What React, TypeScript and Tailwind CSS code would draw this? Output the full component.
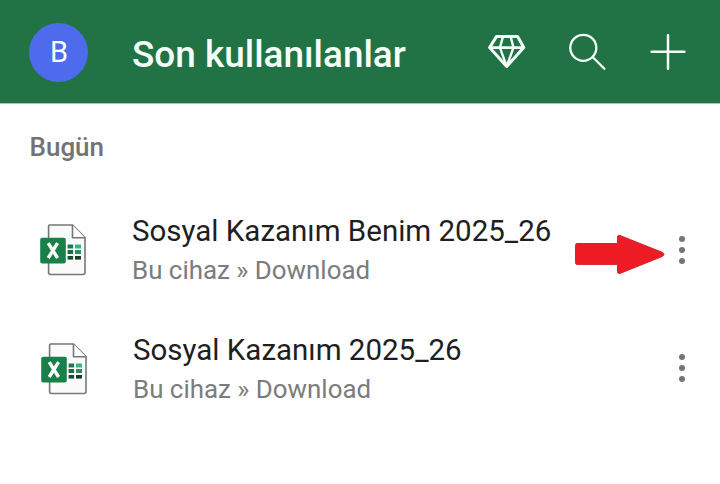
import React from "react";

const files = [
  {
    id: 1,
    name: "Sosyal Kazanım Benim 2025_26",
    location: "Bu cihaz » Download",
    highlighted: true,
    offset: "pl-[38px]",
    dots: "pt-[42px]",
  },
  {
    id: 2,
    name: "Sosyal Kazanım 2025_26",
    location: "Bu cihaz » Download",
    highlighted: false,
    offset: "pl-[39px]",
    dots: "pt-[41px]",
  },
];

const DiamondIcon = () => (
  <svg
    className="w-10 h-10"
    fill="none"
    stroke="currentColor"
    strokeLinejoin="round"
    strokeWidth="3"
    viewBox="0 0 40 40"
  >
    <path d="M8.4 4.6H29.6L35.8 15.6L18.7 34.4L1.6 15.6Z" />
    <path d="M1.6 15.6H35.8" strokeWidth="2.6" />
    <path d="M15 4.6L11.9 15.6L18.7 34.4L25.5 15.6L22.6 4.6" strokeWidth="2.4" />
  </svg>
);

const SearchIcon = () => (
  <svg
    className="w-10 h-10"
    fill="none"
    stroke="currentColor"
    strokeLinecap="round"
    strokeWidth="2.3"
    viewBox="0 0 40 40"
  >
    <circle cx="15.3" cy="15.8" r="13" />
    <path d="M24.8 25.2L36.4 36.8" />
  </svg>
);

const PlusIcon = () => (
  <svg
    className="w-10 h-10"
    fill="none"
    stroke="currentColor"
    strokeLinecap="round"
    strokeWidth="2.5"
    viewBox="0 0 40 40"
  >
    <path d="M20 3.3V36.7M3.6 19.7H36.4" />
  </svg>
);

const ExcelIcon = () => (
  <svg className="w-[50px] h-[54px]" viewBox="0 0 50 54">
    {/* Sheet with folded corner */}
    <path
      d="M11.6 2H34.5L47 14.7V49.5Q47 51.5 45 51.5H12.6Q10.6 51.5 10.6 49.5V3Q10.6 2 11.6 2Z"
      fill="#fafafa"
      stroke="#777777"
      strokeWidth="1.6"
    />
    <path
      d="M34.5 2V14.7H47"
      fill="#ffffff"
      stroke="#777777"
      strokeLinejoin="round"
      strokeWidth="1.6"
    />
    {/* Cells */}
    <path d="M29.6 21.5h5.5v4h-5.5z" fill="#21794a" />
    <path d="M37 21.5h6v4h-6z" fill="#35b77c" />
    <path d="M29.6 27h5.5v4h-5.5z" fill="#186b42" />
    <path d="M37 27h6v4h-6z" fill="#23925b" />
    <path d="M29.6 33h5.5v3.6h-5.5z" fill="#164a30" />
    <path d="M37 33h6v3.6h-6z" fill="#173c29" />
    <rect fill="#188048" height="25.6" rx="2" width="25.6" x="2.2" y="14.8" />
    <path
      d="M10.2 20.2L19.6 35M19.6 20.2L10.2 35"
      stroke="#ffffff"
      strokeWidth="3.4"
    />
  </svg>
);

const ArrowPointer = () => (
  <svg
    className="absolute left-[574px] top-[40px] w-[92px] h-[42px] text-[#ed1c24]"
    fill="currentColor"
    stroke="#cf2630"
    strokeLinejoin="round"
    viewBox="0 0 92 42"
  >
    <path d="M3 9.5H43.5V3Q43.5 0.7 46 1.5L88 18.2Q92 20.4 88 22.6L46 39.4Q43.5 40 43.5 37.8V30.4H3Q1.5 30.4 1.5 28.5V11.5Q1.5 9.5 3 9.5Z" />
  </svg>
);

const App = () => {
  return (
    <main className="w-[720px] h-[484px] overflow-hidden bg-[#fefefe] font-['Roboto',sans-serif]">
      <header className="flex items-center h-[104px] pl-[29px] pr-8 bg-[#217346] border-b border-[#a5c5b2] text-[#f5fff8]">
        <div className="flex items-center justify-center w-[59px] h-[59px] mt-px rounded-full bg-[#4f6bed] text-[29px] pl-px pt-px">
          B
        </div>
        <h1 className="ml-11 pt-1.5 text-[36.9px] leading-[44px] font-medium whitespace-nowrap">
          Son kullanılanlar
        </h1>
        <nav className="flex items-center gap-10 ml-auto">
          <DiamondIcon />
          <SearchIcon />
          <PlusIcon />
        </nav>
      </header>

      <h2 className="pt-[27px] pl-[29.5px] text-[26px] leading-8 font-medium text-[#737373]">
        Bugün
      </h2>

      <ul className="mt-[31px]">
        {files.map((file) => (
          <li
            key={file.id}
            className={`relative flex items-start h-[119px] ${file.offset}`}
          >
            <div className="pt-[29px]">
              <ExcelIcon />
            </div>
            <div className="ml-11 pt-[17px] whitespace-nowrap">
              <p className="text-[29.5px] leading-10 text-[#1f1f1f]">
                {file.name}
              </p>
              <p className="text-[25.9px] leading-[38px] text-[#7c7c7c]">
                {file.location}
              </p>
            </div>
            {file.highlighted && <ArrowPointer />}
            <div className={`flex flex-col gap-[5px] ml-auto pr-[35px] ${file.dots}`}>
              <span className="w-1.5 h-1.5 rounded-full bg-[#757575]" />
              <span className="w-1.5 h-1.5 rounded-full bg-[#757575]" />
              <span className="w-1.5 h-1.5 rounded-full bg-[#757575]" />
            </div>
          </li>
        ))}
      </ul>
    </main>
  );
};

export default App;
